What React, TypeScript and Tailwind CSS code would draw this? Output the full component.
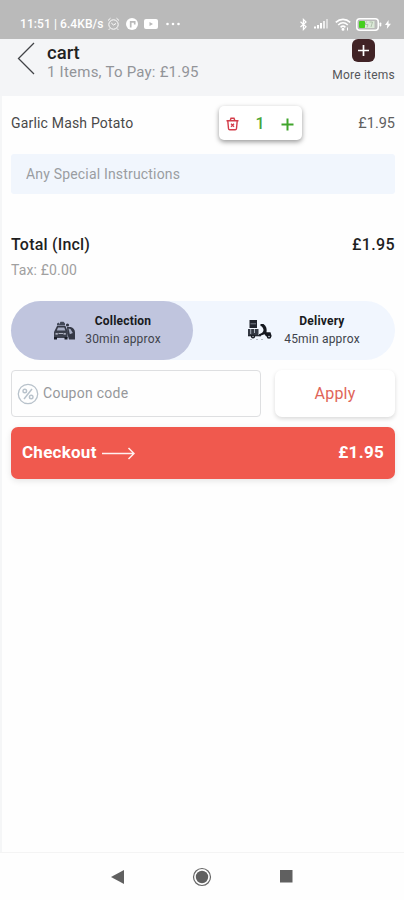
import type { ReactNode } from "react"

const item = { name: "Garlic Mash Potato", qty: 1, price: "£1.95" }

function StatusBar() {
  return (
    <div className="h-[39px] shrink-0 bg-[#bababa] text-white flex items-end justify-between pl-5 pr-[13px] pb-[7px]">
      <div className="flex items-center h-4">
        <span className="w-[86px] text-[12px] leading-4 font-medium whitespace-nowrap tracking-[0.08px]">11:51 | 6.4KB/s</span>
        <svg className="ml-[1px]" width="13" height="14" viewBox="0 0 13 14" fill="none" stroke="white">
          <circle cx="6.5" cy="7.5" r="4.7" />
          <path d="M1 3.5 3.5 1.2M12 3.5 9.5 1.2M4.3 6l2.2 2 2.5-1.5M2.8 11.5l-1 1.3M10.2 11.5l1 1.3" />
        </svg>
        <svg className="ml-[6px]" width="12" height="12" viewBox="0 0 12 12">
          <circle cx="6" cy="6" r="6" fill="white" />
          <path d="M4.7 9.5V3.8h4v2.6" fill="none" stroke="#bababa" strokeWidth="1.7" />
        </svg>
        <svg className="ml-[6px]" width="14" height="10" viewBox="0 0 14 10">
          <rect width="14" height="10" rx="2" fill="white" />
          <path d="M5.5 3 9 5 5.5 7Z" fill="#bababa" />
        </svg>
        <svg className="ml-2" width="14" height="4" viewBox="0 0 14 4" fill="white">
          <circle cx="1.5" cy="2" r="1.3" />
          <circle cx="7" cy="2" r="1.3" />
          <circle cx="12.5" cy="2" r="1.3" />
        </svg>
      </div>
      <div className="flex items-center h-4">
        <svg width="9" height="13" viewBox="0 0 9 13" fill="none" stroke="white" strokeWidth="1.2">
          <path d="M1.5 3.8 7 8.8 4.4 11.5V1.5L7 4 1.5 9" />
        </svg>
        <svg className="ml-[6px]" width="14" height="10" viewBox="0 0 14 10" fill="white">
          <rect x="0" y="7.5" width="2" height="2" />
          <rect x="3" y="6" width="2" height="3.5" />
          <rect x="6" y="4" width="2" height="5.5" />
          <rect x="9" y="2" width="2" height="7.5" opacity=".75" />
          <rect x="12" y="0" width="2" height="9.5" opacity=".5" />
        </svg>
        <svg className="ml-[7px]" width="16" height="13" viewBox="0 0 16 13" fill="none" stroke="white" strokeWidth="1.6">
          <path d="M.8 4.4c4.2-4 10.2-4 14.4 0M3.2 7c3-2.8 6.600-2.8 9.600 0M5.600 9.300c1.500-1.400 3.300-1.400 4.800 0" />
          <circle cx="8" cy="11.3" r=".7" fill="white" />
          <path d="M12.5 9.500v3" strokeWidth="1" />
        </svg>
        <svg className="ml-[5px]" width="26" height="13" viewBox="0 0 26 13">
          <rect x=".75" y=".75" width="21.5" height="11.5" rx="3" fill="none" stroke="white" strokeWidth="1.5" />
          <rect x="23.5" y="4.5" width="1.8" height="4" rx=".8" fill="white" />
          <rect x="3" y="3" width="6" height="7" rx="1" fill="#43cf1c" />
          <rect x="9" y="3" width="9.5" height="7" fill="#dce9d8" />
          <path d="m10.5 3.500-1.500 3h3l-1 3M13.500 4h3l-1.500 5" fill="none" stroke="#a2b59f" strokeWidth=".8" />
        </svg>
        <svg className="ml-[3px]" width="6" height="9" viewBox="0 0 6 9" fill="white">
          <path d="M3.600 0 0 5h2.300L1.800 9 6 3.700H3.500Z" />
        </svg>
      </div>
    </div>
  )
}

function CarIcon() {
  return (
    <svg width="23" height="20" viewBox="0 0 23 20">
      <path d="M4 4.500V2.500L6 1.500v2l1.500-2.800h3L12 2.500v2Z" fill="#424858" />
      <path d="M4 5h8.500l2 5v3h-13v-3Z" fill="#343846" />
      <path d="M5 6.500h6.300l1.100 3H3.800Z" fill="#a7adc4" />
      <path d="M1 10.500h13.500V17H1Z" fill="#3c404e" />
      <path d="M2.500 12.200h2.300v1.300H2.500zM10.500 12.200h2.300v1.300h-2.300zM5.500 12.300h4.500v.8H5.500z" fill="#d3d6e6" />
      <path d="M1 16h3v2.500H1zM11.500 16h3v2.500h-3z" fill="#171a24" />
      <circle cx="14.500" cy="4" r="1.600" fill="#343846" />
      <path d="M14 6h3.700c2.600.5 4.300 2.700 4.300 5.500v7h-6l-1.500-5Z" fill="#343846" />
      <path d="m15.500 7.500 2 .5 2.300 4-3 1.300Z" fill="#a7adc4" />
    </svg>
  )
}

function TruckIcon() {
  return (
    <svg width="26" height="21" viewBox="0 0 26 21">
      <path d="M2.500 0H10v8H2.500Z" fill="#20242d" />
      <path d="M3.500 3.800h5.500" stroke="#8e949f" strokeWidth=".8" />
      <path d="M1 9h10.500v6.500H1Z" fill="#343943" />
      <path d="M3.700 9v5M7.500 9v4" stroke="#b9bfca" strokeWidth=".9" />
      <path d="M13.500 4h3c3 2.300 3.600 5 3 8.300h4l1.200 4H19l-1.500-2-5.500 2v-2c3.700-1 5-3.300 4.300-5.300-.4-1.600-1.500-2.700-2.800-3Z" fill="#15181f" />
      <path d="M1 15h13v1.300H1Z" fill="#252932" />
      <circle cx="6" cy="16.500" r="2.100" fill="#15181f" />
      <circle cx="22" cy="16.500" r="2.300" fill="#15181f" />
      <circle cx="6" cy="16.500" r=".7" fill="#cbd2dc" />
      <circle cx="22" cy="16.500" r=".8" fill="#cbd2dc" />
      <path d="M3 19.500h2M9 19.500h2M14 19.500h2" stroke="#b8bdc6" />
    </svg>
  )
}

function Method({ icon, title, time, className }: { icon: ReactNode; title: string; time: string; className: string }) {
  return (
    <button className={`h-full flex items-center rounded-full text-[#181a20] ${className}`}>
      {icon}
      <span className="flex flex-col items-center w-[76px]">
        <span className="text-[12px] leading-[17px] font-bold tracking-[0.2px]">{title}</span>
        <span className="text-[12px] leading-[18px] text-[#40434b] whitespace-nowrap tracking-[0.2px]">{time}</span>
      </span>
    </button>
  )
}

export default function App() {
  return (
    <div className="w-full h-[900px] bg-[#fefefe] flex flex-col overflow-hidden font-[Roboto,sans-serif]">
      <StatusBar />

      {/* Header */}
      <header className="h-[57px] shrink-0 bg-[#f4f5f7] flex items-start">
        <svg className="mt-[3px] ml-[17px]" width="19" height="33" viewBox="0 0 19 33" fill="none" stroke="#414347" strokeWidth="1.3">
          <path d="M17 1 1.500 16.500 17 32" />
        </svg>
        <div className="ml-[11px] mt-[3px] flex-1">
          <h1 className="text-[18.5px] leading-[22px] font-medium text-[#222]">cart</h1>
          <p className="text-[15px] leading-[16px] text-[#929499] tracking-[0.23px] whitespace-nowrap">1 Items, To Pay: £1.95</p>
        </div>
        <button className="flex flex-col items-center mr-[9px]">
          <svg width="23" height="23" viewBox="0 0 23 23">
            <rect width="23" height="23" rx="6" fill="#412326" />
            <path d="M11.500 6v11M6 11.500h11" stroke="white" strokeWidth="1.7" />
          </svg>
          <span className="mt-[5px] text-[12px] leading-4 text-[#55565a] whitespace-nowrap tracking-[0.22px]">More items</span>
        </button>
      </header>

      {/* Cart contents */}
      <main className="flex-1 border-l-2 border-[#f5f6f7] pl-[9px] pr-[9px]">
        <div className="flex items-center pt-[10px] h-[44px] text-[14px] text-[#494949]">
          <span className="w-[208px] tracking-[0.18px]">{item.name}</span>
          <div className="w-[83px] h-[34px] rounded-[5px] bg-white shadow-[0_2px_5px_rgba(0,0,0,0.4)] flex items-center pl-[7px] pr-[8px] justify-between">
            <svg className="mt-[2px]" width="13" height="14" viewBox="0 0 13 14" fill="none" stroke="#d33c49" strokeWidth="1.400">
              <path d="M.5 3.700h12M4.200 3.500 5 1.300h3l.8 2.200M1.800 4l.7 7.500c.1.900.5 1.300 1.300 1.300h5.400c.8 0 1.200-.4 1.300-1.300l.7-7.500" />
              <path d="m5 6.800 3 3M8 6.800l-3 3" strokeWidth="1.300" />
            </svg>
            <span className="text-[16px] leading-5 mt-[2px] font-medium text-[#48a637]">{item.qty}</span>
            <svg className="mt-[2px]" width="13" height="13" viewBox="0 0 13 13" stroke="#41a52d" strokeWidth="2">
              <path d="M6.500.5v12M.5 6.500h12" />
            </svg>
          </div>
          <span className="ml-auto mt-[2px] text-[14.5px] text-[#606060]">{item.price}</span>
        </div>

        <input
          className="block mt-[14px] w-full h-10 rounded-[3px] bg-[#f1f6fd] px-[15px] text-[14px] tracking-[0.18px] placeholder:text-[#9a9da1] placeholder:opacity-100 outline-none"
          placeholder="Any Special Instructions"
        />

        <div className="mt-[40px] flex justify-between text-[16px] leading-[22px] font-medium text-[#1f1f1f]">
          <span className="tracking-[0.2px]">Total (Incl)</span>
          <span className="tracking-[0.35px]">£1.95</span>
        </div>
        <p className="mt-[4px] text-[14px] leading-5 text-[#a0a0a0] tracking-[0.15px]">Tax: £0.00</p>

        <div className="mt-[21px] h-[59px] rounded-full bg-[#f1f6fe] flex">
          <Method icon={<CarIcon />} title="Collection" time="30min approx" className="w-[182px] bg-[#c0c5de] pl-[42px] gap-[9px]" />
          <Method icon={<TruckIcon />} title="Delivery" time="45min approx" className="pl-[54px] gap-[11px]" />
        </div>

        <div className="mt-[10px] flex justify-between h-[47px]">
          <label className="w-[250px] border border-[#dedfe1] rounded-[4px] flex items-center pl-[5px] gap-[4px]">
            <svg className="shrink-0" width="22" height="22" viewBox="0 0 22 22" fill="none" stroke="#b8c2cb">
              <circle cx="11" cy="11" r="9.7" strokeWidth="1.3" />
              <path d="m7 16 8-10" strokeWidth="1.5" />
              <circle cx="7.8" cy="8" r="1.8" strokeWidth="1.4" />
              <circle cx="14.200" cy="14" r="1.8" strokeWidth="1.4" />
            </svg>
            <input className="w-full outline-none text-[14px] tracking-[0.27px] placeholder:text-[#96989b] placeholder:opacity-100" placeholder="Coupon code" />
          </label>
          <button className="w-[120px] rounded-[7px] bg-white shadow-[0_2px_4px_rgba(0,0,0,0.14)] text-[16px] tracking-[0.2px] text-[#df6559]">Apply</button>
        </div>

        <button className="mt-[10px] w-full h-[52px] rounded-[7px] bg-[#f0594e] shadow-[0_2px_6px_rgba(0,0,0,0.1)] text-white flex items-center pl-[11px] pr-[11px] text-[17px] font-bold">
          <span className="tracking-[0.25px]">Checkout</span>
          <svg className="ml-[5px]" width="33" height="13" viewBox="0 0 33 13" fill="none" stroke="#fff0ef" strokeWidth="1.5">
            <path d="M0 6.500h32M26.500 1 32 6.500 26.500 12" />
          </svg>
          <span className="ml-auto tracking-[0.3px]">£1.95</span>
        </button>
      </main>

      {/* System navigation */}
      <nav className="h-[48px] shrink-0 border-t border-[#f4f4f4] flex items-center justify-between pl-[111px] pr-[111px]">
        <svg width="13" height="14" viewBox="0 0 13 14">
          <path d="M13 0v14L0 7Z" fill="#606060" />
        </svg>
        <svg width="20" height="20" viewBox="0 0 20 20">
          <circle cx="10" cy="10" r="8.500" fill="none" stroke="#666" strokeWidth="1.2" />
          <circle cx="10" cy="10" r="6.200" fill="#606060" />
        </svg>
        <svg width="13" height="13" viewBox="0 0 13 13">
          <rect width="12.5" height="12.5" fill="#606060" />
        </svg>
      </nav>
    </div>
  )
}
